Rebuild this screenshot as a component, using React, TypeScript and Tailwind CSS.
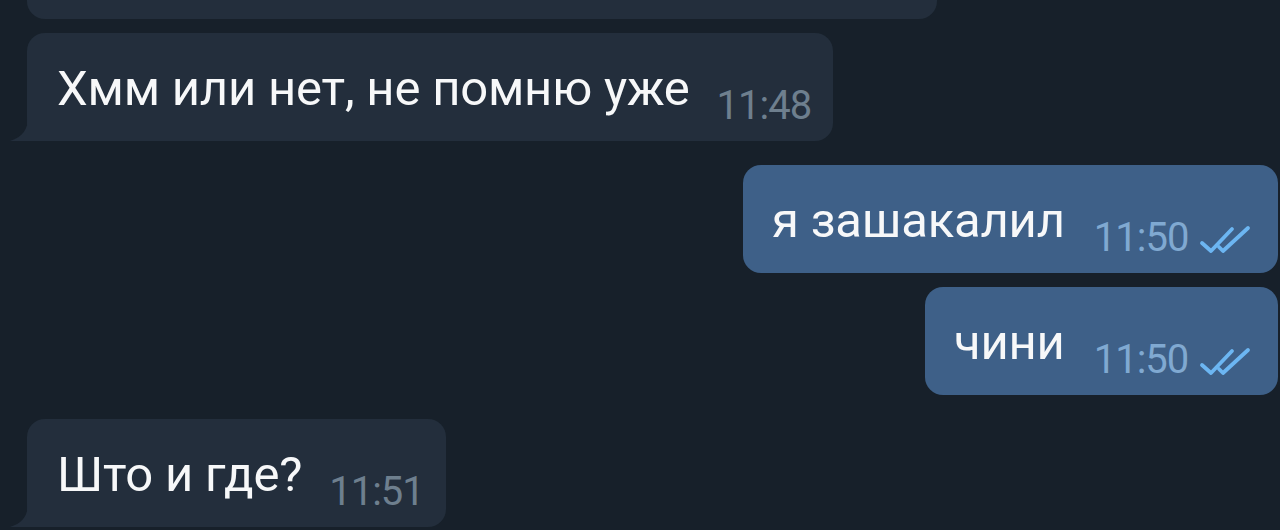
import React from "react";

const Tail = ({ color }: { color: string }) => (
  <svg
    className="absolute bottom-0 left-[-17px]"
    width="18"
    height="24"
    viewBox="0 0 18 24"
  >
    <path d="M18 0 C18 12 13 20 0 24 L18 24 Z" fill={color} />
  </svg>
);

const Checks = () => (
  <svg width="56" height="30" viewBox="0 0 56 30" className="ml-[9px] mb-[3px]">
    <path
      d="M5 18 L14 26 L35 4"
      fill="none"
      stroke="#6cb6f2"
      strokeWidth="3.8"
      strokeLinecap="round"
      strokeLinejoin="round"
    />
    <path
      d="M22 22 L26 26 L51 3"
      fill="none"
      stroke="#6cb6f2"
      strokeWidth="3.8"
      strokeLinecap="round"
      strokeLinejoin="round"
    />
  </svg>
);

function Incoming({
  text,
  time,
  width,
  tail,
}: {
  text: string;
  time: string;
  width: string;
  tail?: boolean;
}) {
  return (
    <div
      className={`relative ml-[27px] h-[108px] ${width} bg-[#232e3c] rounded-[18px] ${
        tail ? "rounded-bl-none" : ""
      } flex items-end pl-[30px] pb-[15px]`}
    >
      {tail && <Tail color="#232e3c" />}
      <span className="text-[49px] leading-none text-[#f7f8f9] mb-[13px] tracking-[-0.2px]">
        {text}
      </span>
      <span className="text-[40px] leading-none text-[#6e7f8e] ml-[27px] tracking-[-1px]">
        {time}
      </span>
    </div>
  );
}

function Outgoing({ text, time, width }: { text: string; time: string; width: string }) {
  return (
    <div
      className={`relative ml-auto mr-[2px] h-[108px] ${width} bg-[#3e6088] rounded-[18px] flex items-end pl-[29px] pb-[15px]`}
    >
      <span className="text-[49px] leading-none text-[#f7f8f9] mb-[13px] tracking-[-0.2px]">
        {text}
      </span>
      <span className="text-[40px] leading-none text-[#80a9d1] ml-[29px] tracking-[-1px]">
        {time}
      </span>
      <Checks />
    </div>
  );
}

export default function App() {
  return (
    <div
      className="w-[1280px] h-[530px] overflow-hidden bg-[#17202a] flex flex-col"
      style={{ fontFamily: "Roboto, 'Noto Sans', sans-serif" }}
    >
      <div className="ml-[27px] h-[19px] w-[910px] bg-[#232e3c] rounded-b-[18px]" />
      <div className="mt-[14px]">
        <Incoming text="Хмм или нет, не помню уже" time="11:48" width="w-[806px]" tail />
      </div>
      <div className="mt-[24px]">
        <Outgoing text="я зашакалил" time="11:50" width="w-[535px]" />
      </div>
      <div className="mt-[14px]">
        <Outgoing text="чини" time="11:50" width="w-[353px]" />
      </div>
      <div className="mt-[24px]">
        <Incoming text="Што и где?" time="11:51" width="w-[419px]" tail />
      </div>
    </div>
  );
}
